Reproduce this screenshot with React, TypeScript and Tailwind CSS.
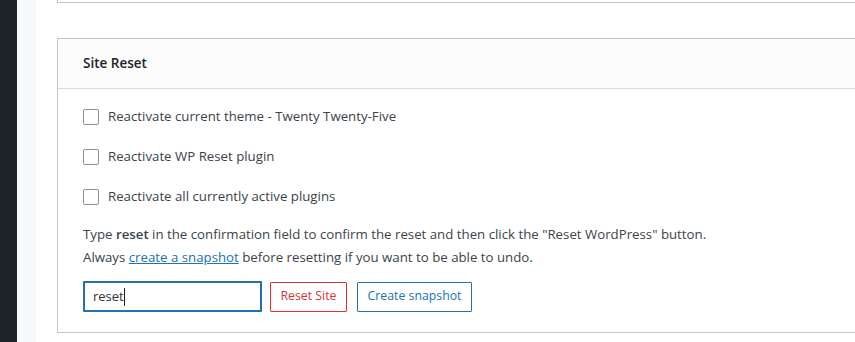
import React from "react";

const font = { fontFamily: '"Open Sans", "Noto Sans", Arial, sans-serif' };

function Check({ label }: { label: string }) {
  return (
    <label className="flex h-[40px] items-center gap-[9px]">
      <span className="h-[16px] w-[16px] rounded-[2px] border border-[#8c8f94] bg-white" />
      <span>{label}</span>
    </label>
  );
}

export default function App() {
  return (
    <div
      className="flex h-[342px] w-[855px] overflow-hidden bg-white text-[13.25px] text-[#3c434a]"
      style={font}
    >
      {/* admin menu edge */}
      <div className="w-[17px] shrink-0 bg-[#1d2327]" />
      <div className="w-[19px] shrink-0 bg-[#f8f9fb]" />

      <div className="flex min-w-0 flex-1 flex-col pl-[21px]">
        {/* previous card tail */}
        <div className="h-[3px] w-[830px] border-b border-l border-[#c3c4c7] bg-white" />

        {/* Site Reset card */}
        <div className="mt-[35px] w-[830px] border border-r-0 border-[#c3c4c7] bg-white">
          <div className="flex h-[50px] items-center border-b border-[#dcdcde] bg-[#fcfcfc] px-[25px] text-[13.5px] font-semibold text-[#1d2327]">
            Site Reset
          </div>

          <div className="px-[25px] pt-[8px] pb-[20px]">
            <Check label="Reactivate current theme - Twenty Twenty-Five" />
            <Check label="Reactivate WP Reset plugin" />
            <Check label="Reactivate all currently active plugins" />

            <p className="mt-[6px] leading-[23px]">
              Type <b className="font-semibold">reset</b> in the confirmation field to confirm the reset and then click the "Reset WordPress" button.
            </p>
            <p className="leading-[23px]">
              Always{" "}
              <a href="#" className="text-[#2271b1] underline">
                create a snapshot
              </a>{" "}
              before resetting if you want to be able to undo.
            </p>

            <div className="mt-[12px] flex items-center gap-[8px]">
              <div className="flex h-[31px] w-[179px] items-center rounded-[1px] border-2 border-[#2271b1] px-[8px] text-[13px] text-[#2c3338]">
                reset
                <span className="h-[18px] w-px bg-[#1d2327]" />
              </div>
              <button className="h-[30px] w-[77px] rounded-[1px] border border-[#d63638] bg-white text-[12.3px] text-[#d63638]">
                Reset Site
              </button>
              <button className="ml-[2px] h-[30px] w-[115px] rounded-[1px] border border-[#2271b1] bg-white text-[12.3px] text-[#2271b1]">
                Create snapshot
              </button>
            </div>
          </div>
        </div>
      </div>
    </div>
  );
}
